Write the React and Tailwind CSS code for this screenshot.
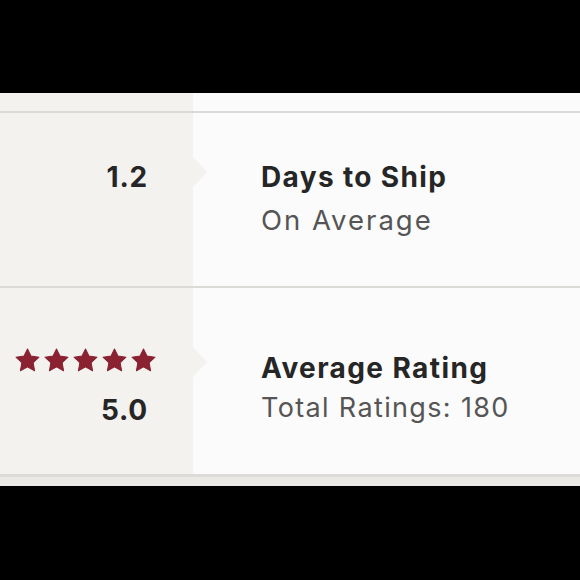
import React from "react";

const LEFT = "bg-[#f3f2ef]";
const RIGHT = "bg-[#fbfbfb]";

function Star() {
  return (
    <svg width="25" height="24" viewBox="0 0 24 23" className="block">
      <path
        d="M12 0.9L15.3 7.7L23 8.8L17.4 14.1L18.8 21.8L12 18.1L5.2 21.8L6.6 14.1L1 8.8L8.7 7.7Z"
        fill="#8a2232"
        stroke="#8a2232"
        strokeWidth="1"
        strokeLinejoin="round"
      />
    </svg>
  );
}

function Arrow({ top }) {
  return (
    <div
      className="absolute left-[193px] w-0 h-0 border-y-[15px] border-y-transparent border-l-[14px] border-l-[#f3f2ef]"
      style={{ top }}
    />
  );
}

export default function App() {
  return (
    <div
      className="w-[580px] h-[580px] bg-black flex flex-col overflow-hidden"
      style={{ fontFamily: "Inter, 'Noto Sans', sans-serif" }}
    >
      <div className="h-[93px] shrink-0" />
      <div className="flex flex-col shrink-0">
        <div className="flex h-[18px]">
          <div className={`w-[193px] ${LEFT}`} />
          <div className={`flex-1 ${RIGHT}`} />
        </div>
        <div className="h-[2px] bg-[#dcdad6]" />
        {/* Row 1 */}
        <div className="relative flex h-[173px]">
          <div className={`w-[193px] ${LEFT} flex justify-end pr-[45px] pt-[46px]`}>
            <div className="text-[28px] leading-[36px] font-bold tracking-[0.8px] text-[#262626]">1.2</div>
          </div>
          <div className={`flex-1 ${RIGHT} pl-[68px] pt-[46px]`}>
            <div className="text-[28px] leading-[36px] font-bold tracking-[1.35px] text-[#262626]">Days to Ship</div>
            <div className="mt-[5px] text-[27.5px] leading-[40px] tracking-[2px] text-[#555555]">On Average</div>
          </div>
          <Arrow top={44} />
        </div>
        <div className="h-[2px] bg-[#dcdad6]" />
        {/* Row 2 */}
        <div className="relative flex h-[186px]">
          <div className={`w-[193px] ${LEFT} flex flex-col items-end pr-[37px] pt-[60px]`}>
            <div className="flex gap-[4px]">
              <Star />
              <Star />
              <Star />
              <Star />
              <Star />
            </div>
            <div className="mt-[20px] pr-[8px] text-[28px] leading-[36px] font-bold tracking-[0.8px] text-[#262626]">5.0</div>
          </div>
          <div className={`flex-1 ${RIGHT} pl-[68px] pt-[62px]`}>
            <div className="text-[28px] leading-[36px] font-bold tracking-[1.4px] text-[#262626]">Average Rating</div>
            <div className="mt-[2px] text-[27px] leading-[40px] tracking-[1.35px] text-[#555555]">Total Ratings: 180</div>
          </div>
          <Arrow top={59} />
        </div>
        <div className="h-[3px] bg-[#dddbd7]" />
        <div className="h-[9px] bg-[#ebe9e5]" />
      </div>
      <div className="flex-1" />
    </div>
  );
}
